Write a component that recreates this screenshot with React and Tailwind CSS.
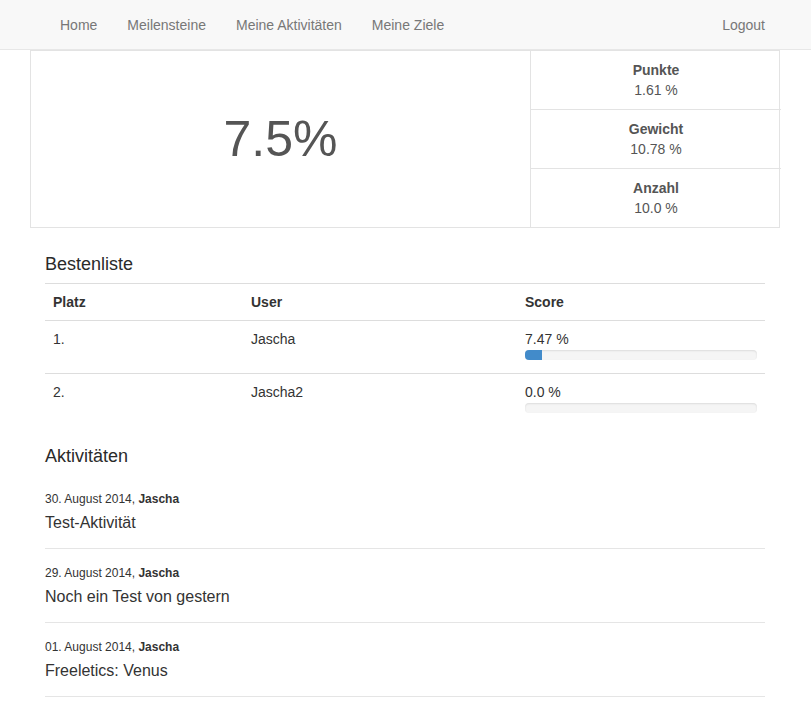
import React from 'react';

const navLinks = ['Home', 'Meilensteine', 'Meine Aktivitäten', 'Meine Ziele'];

const stats = [
  { label: 'Punkte', value: '1.61 %' },
  { label: 'Gewicht', value: '10.78 %' },
  { label: 'Anzahl', value: '10.0 %' },
];

const ranking = [
  { place: '1.', user: 'Jascha', score: '7.47 %', pct: 7.47 },
  { place: '2.', user: 'Jascha2', score: '0.0 %', pct: 0 },
];

const activities = [
  { date: '30. August 2014', user: 'Jascha', title: 'Test-Aktivität' },
  { date: '29. August 2014', user: 'Jascha', title: 'Noch ein Test von gestern' },
  { date: '01. August 2014', user: 'Jascha', title: 'Freeletics: Venus' },
];

export default function App() {
  return (
    <div className="min-h-screen bg-white text-[14px] leading-[20px] text-[#333]" style={{ fontFamily: '"Liberation Sans", Arial, sans-serif' }}>
      {/* Navbar */}
      <nav className="h-[50px] bg-[#f8f8f8] border-b border-[#e7e7e7]">
        <div className="w-[750px] ml-[30px] px-[15px] flex items-center h-full">
          <ul className="flex">
            {navLinks.map((link) => (
              <li key={link}>
                <a href="#" className="block px-[15px] py-[14px] text-[#777]">{link}</a>
              </li>
            ))}
          </ul>
          <a href="#" className="ml-auto -mr-[15px] block px-[15px] py-[14px] text-[#777]">Logout</a>
        </div>
      </nav>

      <div className="w-[750px] ml-[30px]">
        {/* Overview card */}
        <div className="grid grid-cols-[500px_250px] border border-[#e3e3e3]">
          <div className="flex items-center justify-center border-r border-[#e3e3e3] text-[#555]">
            <span className="text-[50px] leading-none">7.5%</span>
          </div>
          <div>
            {stats.map((s, i) => (
              <div key={s.label} className={`py-[9px] text-center text-[#555] ${i < stats.length - 1 ? 'border-b border-[#e3e3e3]' : ''}`}>
                <div className="font-bold">{s.label}</div>
                <div>{s.value}</div>
              </div>
            ))}
          </div>
        </div>

        <div className="px-[15px]">
          {/* Bestenliste */}
          <h3 className="mt-[26px] mb-[9px] text-[18px] leading-[20px] font-medium text-[#2a2a2a]">Bestenliste</h3>
          <table className="w-full border-collapse">
            <thead>
              <tr className="border-t border-b border-[#ddd]">
                <th className="w-[198px] text-left font-bold p-[8px]">Platz</th>
                <th className="w-[274px] text-left font-bold p-[8px]">User</th>
                <th className="text-left font-bold p-[8px]">Score</th>
              </tr>
            </thead>
            <tbody>
              {ranking.map((r, i) => (
                <tr key={r.place} className={i < ranking.length - 1 ? 'border-b border-[#ddd]' : ''}>
                  <td className="p-[8px] align-top">{r.place}</td>
                  <td className="p-[8px] align-top">{r.user}</td>
                  <td className="p-[8px] align-top">
                    <div>{r.score}</div>
                    <div className="mt-[1px] mb-[5px] h-[10px] w-[232px] rounded-[4px] bg-[#f5f5f5] shadow-[inset_0_1px_2px_rgba(0,0,0,0.1)] overflow-hidden">
                      <div className="h-full bg-[#428bca]" style={{ width: `${r.pct}%` }} />
                    </div>
                  </td>
                </tr>
              ))}
            </tbody>
          </table>

          {/* Aktivitäten */}
          <h3 className="mt-[20px] text-[18px] leading-[20px] font-medium text-[#2a2a2a]">Aktivitäten</h3>
          <div className="mt-[9px]">
            {activities.map((a) => (
              <div key={a.date} className="pt-[16px] pb-[14px] border-b border-[#e5e5e5]">
                <div className="text-[12px] leading-[17px]">
                  {a.date}, <span className="font-bold">{a.user}</span>
                </div>
                <div className="mt-[4px] text-[16px] leading-[22px]">{a.title}</div>
              </div>
            ))}
          </div>
        </div>
      </div>
    </div>
  );
}
